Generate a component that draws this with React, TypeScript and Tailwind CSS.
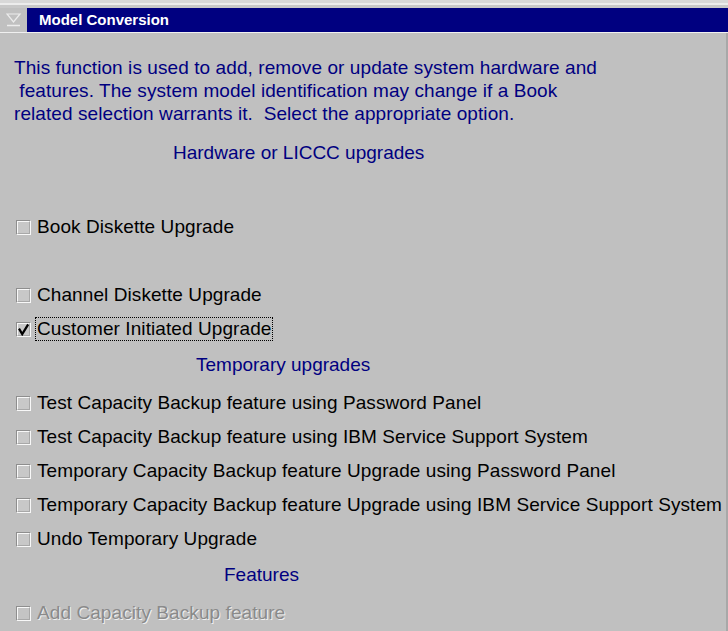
import React from "react";

type Item = { label: string; checked?: boolean; disabled?: boolean; focused?: boolean };

function Box({ checked, disabled }: { checked?: boolean; disabled?: boolean }) {
  return (
    <div className="w-[15px] h-[15px] shrink-0 border border-t-[#8e8e8e] border-l-[#8e8e8e] border-b-[#f8f8f8] border-r-[#f8f8f8]">
      <div
        className={`w-full h-full border border-t-[#f8f8f8] border-l-[#f8f8f8] border-b-[#a8a8a8] border-r-[#a8a8a8] flex items-center justify-center ${
          disabled ? "bg-[#c4c4c4]" : "bg-[#c8c8c8]"
        }`}
      >
        {checked && (
          <svg width="13" height="13" viewBox="0 0 13 13">
            <path d="M1.2 5.5 L5 12 L12 0.5" fill="none" stroke="#000" strokeWidth="2.6" strokeLinejoin="miter" />
          </svg>
        )}
      </div>
    </div>
  );
}

function Row({ label, checked, disabled, focused }: Item) {
  return (
    <div className="h-[34px] flex items-center pl-[16px] gap-[5px]">
      <Box checked={checked} disabled={disabled} />
      <span
        className={`px-[1px] leading-[22px] text-[19px] tracking-[0.08px] ${
          focused ? "outline outline-1 outline-dotted outline-black" : ""
        } ${disabled ? "text-[#8a8a8a] [text-shadow:1px_1px_0_#f0f0f0]" : "text-black"}`}
      >
        {label}
      </span>
    </div>
  );
}

function Header({ text, indent }: { text: string; indent: string }) {
  return (
    <div className={`h-[34px] flex items-center pt-[3px] text-[19px] leading-[22px] text-[#000080] ${indent}`}>
      {text}
    </div>
  );
}

export default function App() {
  return (
    <div
      className="w-[728px] h-[631px] overflow-hidden bg-[#c0c0c0] flex flex-col"
      style={{ fontFamily: '"Liberation Sans", Arial, sans-serif' }}
    >
      {/* top frame lines */}
      <div className="h-[3px] bg-[#d8d8d8]" />
      <div className="h-[2px] bg-[#ececec]" />
      <div className="h-[3px] bg-[#c8c8c8]" />
      {/* title bar */}
      <div className="flex h-[24px] items-stretch">
        <div className="w-[27px] flex items-center justify-center">
          <svg width="16" height="14" viewBox="0 0 16 14">
            <path d="M1 1 H14 L7.5 9 Z" fill="none" stroke="#ececec" strokeWidth="1.2" />
            <path d="M1 12.5 H14" stroke="#ececec" strokeWidth="1.5" />
          </svg>
        </div>
        <div className="flex-1 bg-[#000080] text-white font-bold text-[15px] flex items-center pl-[12px]">
          Model Conversion
        </div>
      </div>
      <div className="h-[1px] bg-[#f0f0f0]" />

      <div className="flex-1 flex border-r-[2px] border-[#a8a8a8]">
        <div className="flex-1 flex flex-col">
          <div className="pl-[14px] pt-[23px] text-[19px] leading-[23px] tracking-[0.08px] text-[#000080]">
            <div>This function is used to add, remove or update system hardware and</div>
            <div>&nbsp;features. The system model identification may change if a Book</div>
            <div className="whitespace-pre">related selection warrants it.  Select the appropriate option.</div>
          </div>

          <div className="mt-[9px]">
            <Header text="Hardware or LICCC upgrades" indent="pl-[173px]" />
          </div>
          <div className="h-[42px]" />
          <Row label="Book Diskette Upgrade" />
          <div className="h-[34px]" />
          <Row label="Channel Diskette Upgrade" />
          <Row label="Customer Initiated Upgrade" checked focused />
          <Header text="Temporary upgrades" indent="pl-[196px]" />
          <div className="h-[6px]" />
          <Row label="Test Capacity Backup feature using Password Panel" />
          <Row label="Test Capacity Backup feature using IBM Service Support System" />
          <Row label="Temporary Capacity Backup feature Upgrade using Password Panel" />
          <Row label="Temporary Capacity Backup feature Upgrade using IBM Service Support System" />
          <Row label="Undo Temporary Upgrade" />
          <Header text="Features" indent="pl-[224px]" />
          <div className="h-[6px]" />
          <Row label="Add Capacity Backup feature" disabled />
        </div>
      </div>
    </div>
  );
}
